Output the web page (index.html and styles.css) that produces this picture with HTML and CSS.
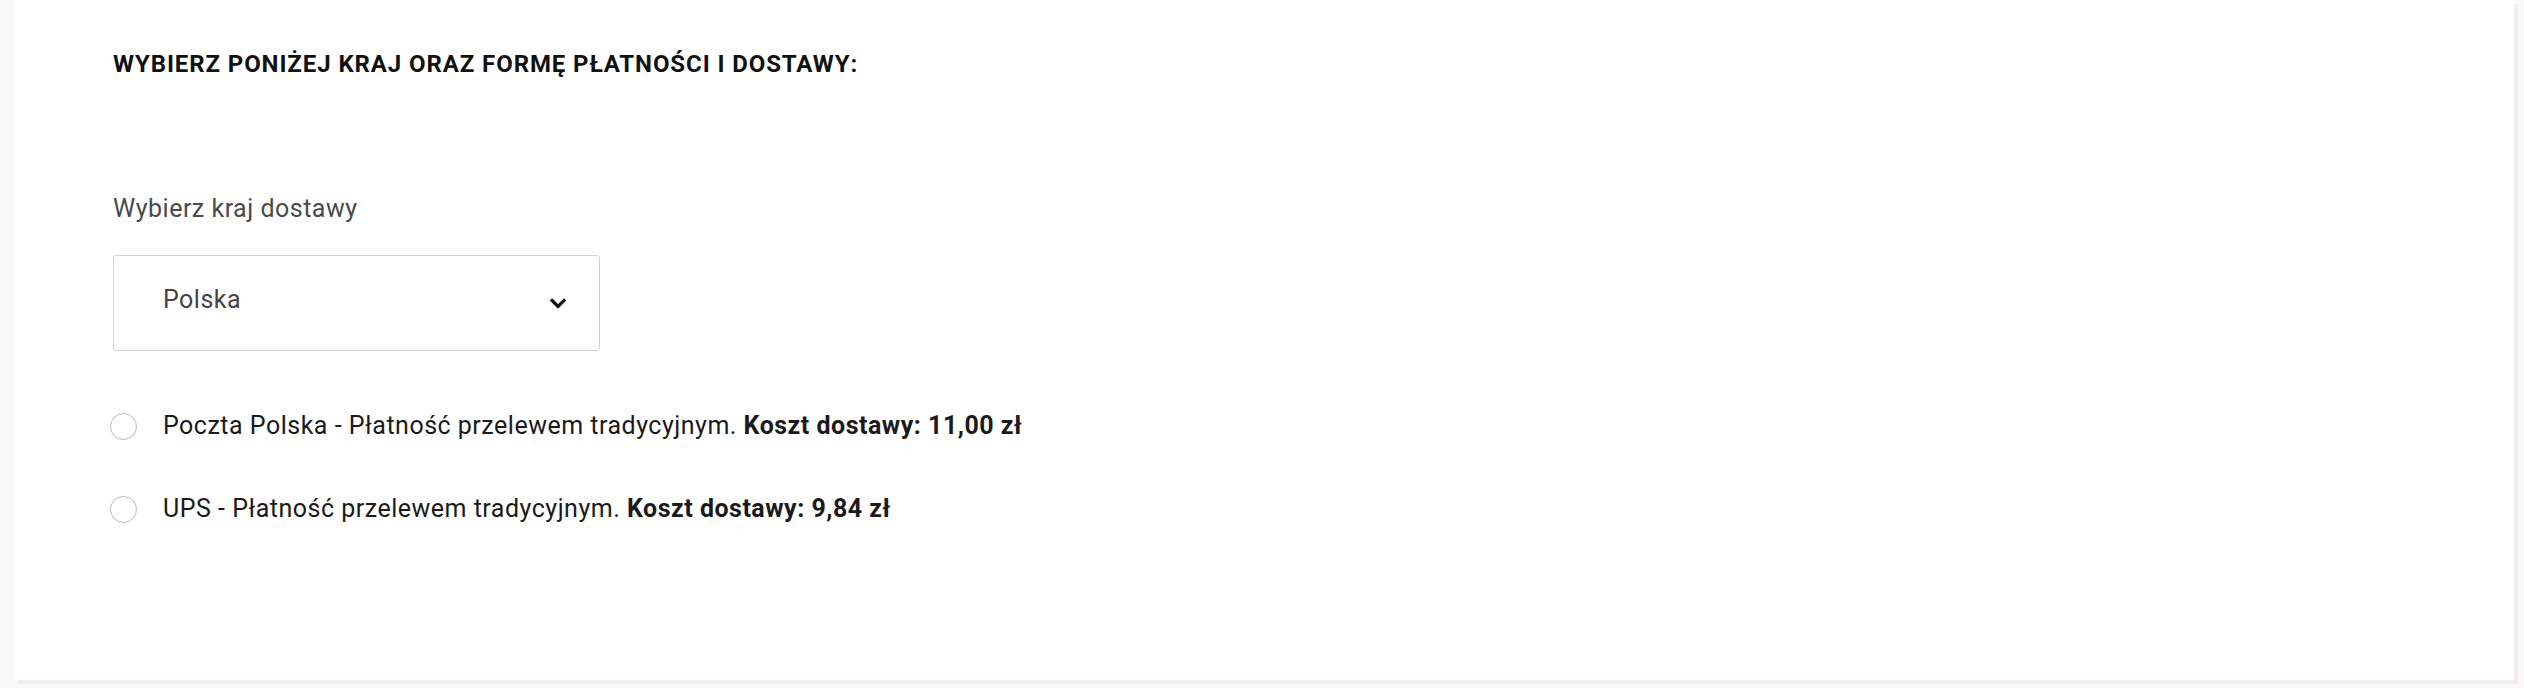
FILE: index.html
```html
<!DOCTYPE html>
<html lang="pl">
<head>
<meta charset="utf-8">
<title>Dostawa</title>
<link rel="stylesheet" href="styles.css">
</head>
<body>
<div class="page">
  <section class="card">
    <h2 class="title">WYBIERZ PONIŻEJ KRAJ ORAZ FORMĘ PŁATNOŚCI I DOSTAWY:</h2>
    <div class="label">Wybierz kraj dostawy</div>
    <div class="select">
      <span class="select-value">Polska</span>
      <svg class="chevron" width="16" height="11" viewBox="0 0 16 11"><path d="M2 2.5 L8 8.5 L14 2.5" fill="none" stroke="#111" stroke-width="3.2" stroke-linecap="square"/></svg>
    </div>
    <div class="options">
      <label class="option"><span class="radio"></span><span class="option-text">Poczta Polska - Płatność przelewem tradycyjnym. <b>Koszt dostawy: 11,00 zł</b></span></label>
      <label class="option"><span class="radio"></span><span class="option-text">UPS - Płatność przelewem tradycyjnym. <b>Koszt dostawy: 9,84 zł</b></span></label>
    </div>
  </section>
</div>
</body>
</html>
```

FILE: styles.css
```css
html, body {
  margin: 0;
  padding: 0;
  background: #f9f9f9;
}
body {
  font-family: Roboto, "Liberation Sans", sans-serif;
  color: #1a1a1a;
}
.page {
  padding-left: 14px;
  height: 688px;
  box-sizing: border-box;
}
.card {
  width: 2500px;
  height: 680px;
  box-sizing: border-box;
  background: #ffffff;
  box-shadow: 4px 4px 0 #f2ecec;
  padding: 50px 0 0 99px;
}
.title {
  margin: 0;
  font-size: 24px;
  line-height: 28px;
  font-weight: 700;
  letter-spacing: 0.9px;
  color: #111111;
}
.label {
  margin-top: 117px;
  font-size: 25px;
  line-height: 28px;
  letter-spacing: 0.5px;
  color: #4a4a4a;
}
.select {
  margin-top: 32px;
  width: 487px;
  height: 96px;
  box-sizing: border-box;
  border: 1.5px solid #d2d2d2;
  border-radius: 3px;
  display: flex;
  align-items: center;
  justify-content: space-between;
  padding: 0 33px 6px 49px;
}
.select-value {
  font-size: 25px;
  line-height: 28px;
  letter-spacing: 0.5px;
  color: #444444;
}
.chevron {
  display: block;
  margin-top: 6px;
}
.options {
  margin-top: 61px;
  display: flex;
  flex-direction: column;
  gap: 55px;
}
.option {
  display: flex;
  align-items: center;
  gap: 26px;
  margin-left: -3px;
}
.radio {
  width: 27px;
  height: 27px;
  box-sizing: border-box;
  border-radius: 50%;
  border: 1.5px solid #b8b8b8;
  background: #ffffff;
  flex: none;
}
.option-text {
  font-size: 25px;
  line-height: 28px;
  letter-spacing: 0.5px;
  color: #1a1a1a;
}
.option-text b {
  font-weight: 700;
}
```
